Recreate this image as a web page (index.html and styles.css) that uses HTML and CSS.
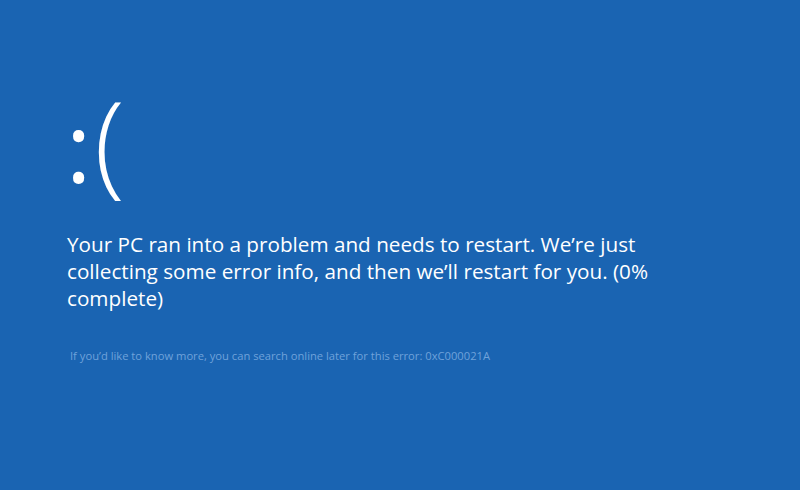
FILE: index.html
```html
<!DOCTYPE html>
<html>
<head>
<meta charset="utf-8">
<link rel="stylesheet" href="styles.css">
</head>
<body>
<main class="screen">
  <div class="face"><span class="eyes">:</span><span class="mouth">(</span></div>
  <p class="message">Your PC ran into a problem and needs to restart. We’re just collecting some error info, and then we’ll restart for you. (0% complete)</p>
  <p class="detail">If you’d like to know more, you can search online later for this error: 0xC000021A</p>
</main>
</body>
</html>
```

FILE: styles.css
```css
html, body {
  margin: 0;
  padding: 0;
  background: #1a64b2;
  height: 100%;
}
.screen {
  box-sizing: border-box;
  width: 800px;
  height: 490px;
  padding: 70px 0 0 66px;
  color: #ffffff;
  font-family: "Open Sans", "Noto Sans", sans-serif;
}
.face {
  font-size: 108px;
  line-height: 140px;
  font-weight: 400;
  height: 140px;
  white-space: nowrap;
}
.eyes {
  font-size: 96px;
  margin-right: 3px;
}
.mouth {
  font-size: 112px;
  font-weight: 350;
}
.message {
  margin: 21px 0 0 1px;
  width: 620px;
  font-size: 20.7px;
  line-height: 27px;
}
.detail {
  margin: 36px 0 0 4px;
  font-size: 11.2px;
  line-height: 16px;
  color: #6fa2da;
}
```
